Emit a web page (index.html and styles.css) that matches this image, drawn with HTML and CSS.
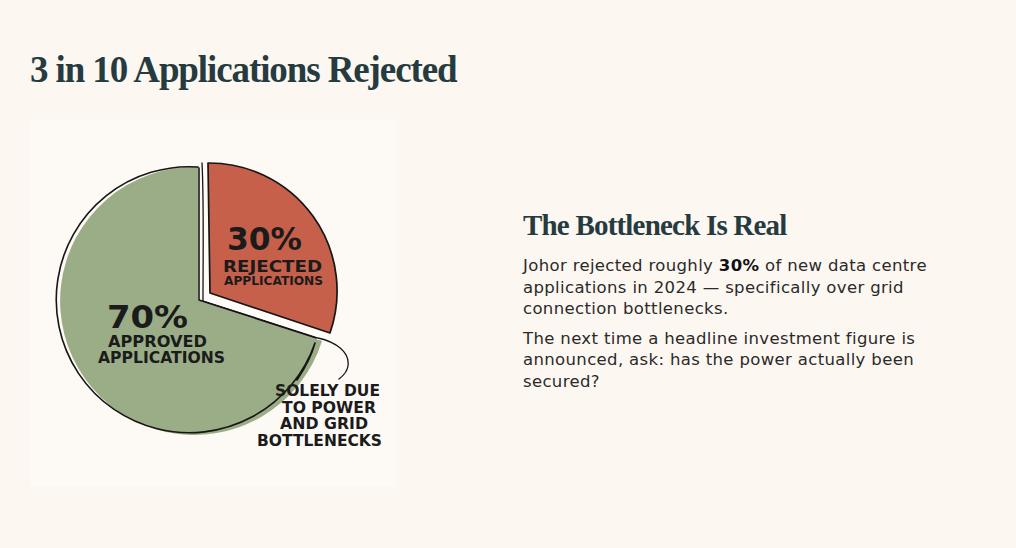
FILE: index.html
```html
<!DOCTYPE html>
<html>
<head>
<meta charset="utf-8">
<link rel="stylesheet" href="styles.css">
</head>
<body>
<div class="page">
  <h1 class="title">3 in 10 Applications Rejected</h1>
  <div class="content">
    <div class="figure">
      <svg class="chart" width="366" height="366" viewBox="30 120 366 366" xmlns="http://www.w3.org/2000/svg">
        <rect x="30" y="120" width="366" height="366" fill="#fdf9f4"/>
        <!-- white gap band -->
        <path d="M203 164 L209 164 L211 293 L331 333 L322 341 L203 302 Z" fill="#fffcf8"/>
        <!-- green slice -->
        <path d="M198 167 L198 300 L322 341 A134 134 0 1 1 198 167 Z" fill="#9aad86"/>
        <path d="M199 168 L199 300 L316 338 M198 167 A133 133 0 1 0 315 343 C311 358 305 368 297 380" fill="none" stroke="#161616" stroke-width="1.6" stroke-linejoin="round" stroke-linecap="round"/>
        <!-- red slice -->
        <path d="M208 163 L210 293 L330 333 A128 128 0 0 0 208 163 Z" fill="#c6604b" stroke="#161616" stroke-width="1.7" stroke-linejoin="round"/>
        <!-- outline of gap band -->
        <path d="M202 163 C204 200 203 260 203 301 L318 338 C336 342 350 352 348 366 C347 372 343 376 339 379" fill="none" stroke="#161616" stroke-width="1.3" stroke-linecap="round"/>
        <g class="lbl">
          <text x="227" y="250" class="big" textLength="75" lengthAdjust="spacingAndGlyphs">30%</text>
          <text x="223" y="272" class="mid" textLength="99" lengthAdjust="spacingAndGlyphs">REJECTED</text>
          <text x="224" y="285" class="small" textLength="99" lengthAdjust="spacingAndGlyphs">APPLICATIONS</text>
          <text x="107" y="328" class="big" textLength="81" lengthAdjust="spacingAndGlyphs">70%</text>
          <text x="108" y="347" class="mid" textLength="99" lengthAdjust="spacingAndGlyphs">APPROVED</text>
          <text x="98" y="363" class="mid" textLength="127" lengthAdjust="spacingAndGlyphs">APPLICATIONS</text>
          <text x="275" y="396" class="note" textLength="105" lengthAdjust="spacingAndGlyphs">SOLELY DUE</text>
          <text x="282" y="413" class="note" textLength="94" lengthAdjust="spacingAndGlyphs">TO POWER</text>
          <text x="280" y="429" class="note" textLength="88" lengthAdjust="spacingAndGlyphs">AND GRID</text>
          <text x="257" y="446" class="note" textLength="125" lengthAdjust="spacingAndGlyphs">BOTTLENECKS</text>
        </g>
      </svg>
    </div>
    <div class="text">
      <h2 class="subtitle">The Bottleneck Is Real</h2>
      <p class="para">Johor rejected roughly <strong>30%</strong> of new data centre applications in 2024 — specifically over grid connection bottlenecks.</p>
      <p class="para">The next time a headline investment figure is announced, ask: has the power actually been secured?</p>
    </div>
  </div>
</div>
</body>
</html>
```

FILE: styles.css
```css
html, body {
  margin: 0;
  padding: 0;
  background: #fdf7f1;
}
.page {
  padding: 48px 0 0 30px;
  width: 1016px;
  height: 548px;
  box-sizing: border-box;
}
.title {
  margin: 0 0 29px 0;
  font-family: "Liberation Serif", "DejaVu Serif", serif;
  font-weight: 700;
  font-size: 37px;
  line-height: 43px;
  letter-spacing: -1.1px;
  color: #263b40;
}
.content {
  display: flex;
  align-items: center;
  gap: 127px;
}
.figure {
  width: 366px;
  height: 366px;
  flex: none;
}
.chart {
  display: block;
}
.lbl text {
  font-family: "DejaVu Sans", sans-serif;
  font-weight: 700;
  fill: #1b1b1b;
}
.lbl .big {
  font-size: 32px;
}
.lbl .mid {
  font-size: 15.5px;
}
.lbl .small {
  font-size: 12.5px;
}
.lbl .note {
  font-size: 15px;
}
.text {
  width: 425px;
  padding-top: 2px;
}
.subtitle {
  margin: 0 0 13px 0;
  font-family: "Liberation Serif", "DejaVu Serif", serif;
  font-weight: 700;
  font-size: 29px;
  line-height: 34px;
  letter-spacing: -0.8px;
  color: #263b40;
}
.para {
  margin: 0 0 8px 0;
  font-family: "DejaVu Sans", sans-serif;
  font-size: 16.5px;
  line-height: 21.5px;
  letter-spacing: 0.35px;
  color: #2a2a2a;
}
.para strong {
  font-weight: 700;
  color: #111;
}
```
